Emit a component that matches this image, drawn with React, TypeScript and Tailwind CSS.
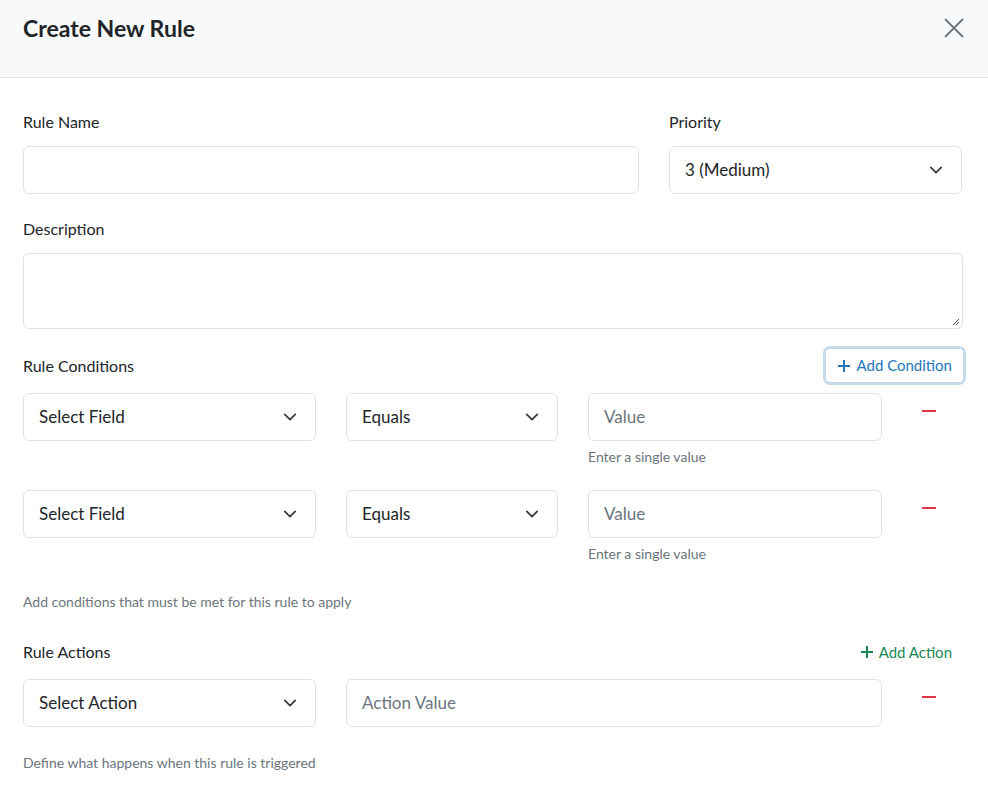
import React from 'react';

const font = { fontFamily: 'Lato, "Noto Sans", sans-serif' };

function Chevron() {
  return (
    <svg width="14" height="14" viewBox="0 0 16 16" fill="none" className="shrink-0">
      <path d="M2 5l6 6 6-6" stroke="#343a40" strokeWidth="2" strokeLinecap="round" strokeLinejoin="round" />
    </svg>
  );
}

function SelectBox({ label, className = '' }: { label: string; className?: string }) {
  return (
    <div
      className={`h-12 flex items-center justify-between pl-[15px] pr-[18px] border border-[#dee2e6] rounded-md bg-white text-[17px] text-[#212529] ${className}`}
    >
      <span>{label}</span>
      <Chevron />
    </div>
  );
}

function TextBox({ placeholder = '', className = '' }: { placeholder?: string; className?: string }) {
  return (
    <div className={`h-12 flex items-center px-[15px] border border-[#dee2e6] rounded-md bg-white text-[17px] text-[#6c757d] ${className}`}>
      {placeholder}
    </div>
  );
}

function Minus() {
  return (
    <div className="w-[51px] pl-[10px] pt-[17px]">
      <div className="w-[14px] h-[2px] bg-[#dc3545]" />
    </div>
  );
}

export default function App() {
  return (
    <div className="w-[988px] h-[799px] bg-white overflow-hidden" style={font}>
      {/* Header */}
      <div className="h-[78px] bg-[#f8f9fa] border-b border-[#dee2e6] flex items-start justify-between pl-[23px] pr-[24px] pt-[13px]">
        <h1 className="text-[23px] font-bold text-[#212529] leading-[30px]">Create New Rule</h1>
        <svg width="20" height="20" viewBox="0 0 20 20" className="mt-[5px]">
          <path d="M1 1l18 18M19 1L1 19" stroke="#6c757d" strokeWidth="1.8" />
        </svg>
      </div>

      {/* Body */}
      <div className="pl-[23px] pr-[25px] pt-[32px] text-[#212529]">
        <div className="flex gap-[30px]">
          <div className="w-[616px]">
            <div className="text-[16px] leading-[24px] mb-[12px]">Rule Name</div>
            <TextBox />
          </div>
          <div className="w-[293px]">
            <div className="text-[16px] leading-[24px] mb-[12px]">Priority</div>
            <SelectBox label="3 (Medium)" />
          </div>
        </div>

        <div className="mt-[23px]">
          <div className="text-[16px] leading-[24px] mb-[12px]">Description</div>
          <div className="h-[76px] border border-[#dee2e6] rounded-md relative">
            <svg width="8" height="8" viewBox="0 0 8 8" className="absolute right-[2px] bottom-[2px]">
              <path d="M7 1L1 7M7 4L4 7" stroke="#555" strokeWidth="1" />
            </svg>
          </div>
        </div>

        {/* Conditions */}
        <div className="mt-[17px] flex items-center justify-between h-[40px]">
          <div className="text-[16px]">Rule Conditions</div>
          <button className="-mr-[3px] -mt-[1px] h-[39px] px-[11px] flex items-center gap-[6px] rounded-[7px] border-[3px] border-[#c6dced] bg-white text-[15px] text-[#2176bd]">
            <svg width="14" height="14" viewBox="0 0 14 14">
              <path d="M7 1v12M1 7h12" stroke="#2176bd" strokeWidth="2" />
            </svg>
            Add Condition
          </button>
        </div>

        <div className="mt-[7px] flex gap-[30px]">
          <SelectBox label="Select Field" className="w-[293px]" />
          <SelectBox label="Equals" className="w-[212px]" />
          <div className="w-[294px]">
            <TextBox placeholder="Value" />
            <div className="text-[14px] text-[#6c757d] mt-[6px] leading-[20px]">Enter a single value</div>
          </div>
          <Minus />
        </div>

        <div className="mt-[23px] flex gap-[30px]">
          <SelectBox label="Select Field" className="w-[293px]" />
          <SelectBox label="Equals" className="w-[212px]" />
          <div className="w-[294px]">
            <TextBox placeholder="Value" />
            <div className="text-[14px] text-[#6c757d] mt-[6px] leading-[20px]">Enter a single value</div>
          </div>
          <Minus />
        </div>

        <div className="mt-[28px] text-[14px] text-[#6c757d] leading-[20px]">
          Add conditions that must be met for this rule to apply
        </div>

        {/* Actions */}
        <div className="mt-[28px] flex items-center justify-between h-[24px]">
          <div className="text-[16px]">Rule Actions</div>
          <button className="mr-[11px] flex items-center gap-[5px] text-[15px] text-[#198754]">
            <svg width="14" height="14" viewBox="0 0 14 14">
              <path d="M7 1v12M1 7h12" stroke="#198754" strokeWidth="2" />
            </svg>
            Add Action
          </button>
        </div>

        <div className="mt-[15px] flex gap-[30px]">
          <SelectBox label="Select Action" className="w-[293px]" />
          <TextBox placeholder="Action Value" className="w-[536px]" />
          <Minus />
        </div>

        <div className="mt-[26px] text-[14px] text-[#6c757d] leading-[20px]">
          Define what happens when this rule is triggered
        </div>
      </div>
    </div>
  );
}
